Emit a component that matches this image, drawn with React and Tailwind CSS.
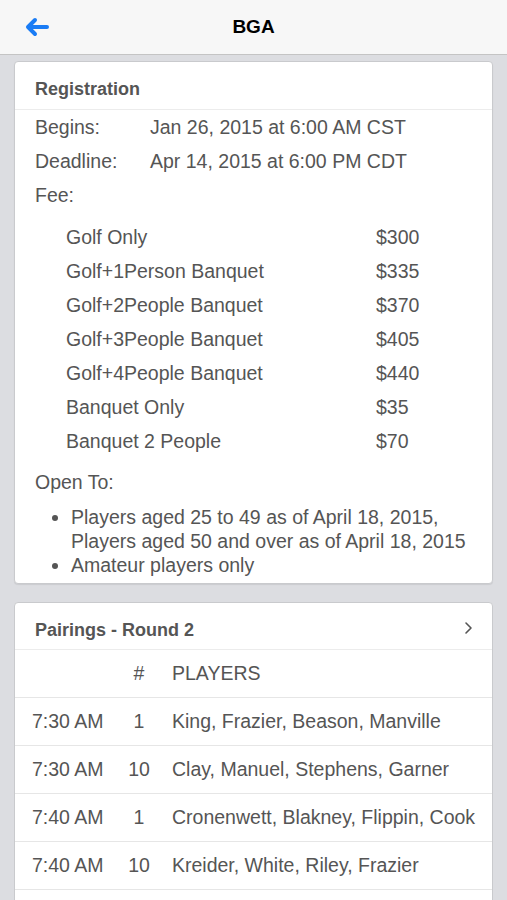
import React from "react";

const fees = [
  ["Golf Only", "$300"],
  ["Golf+1Person Banquet", "$335"],
  ["Golf+2People Banquet", "$370"],
  ["Golf+3People Banquet", "$405"],
  ["Golf+4People Banquet", "$440"],
  ["Banquet Only", "$35"],
  ["Banquet 2 People", "$70"],
];

const pairings = [
  ["7:30 AM", "1", "King, Frazier, Beason, Manville"],
  ["7:30 AM", "10", "Clay, Manuel, Stephens, Garner"],
  ["7:40 AM", "1", "Cronenwett, Blakney, Flippin, Cook"],
  ["7:40 AM", "10", "Kreider, White, Riley, Frazier"],
];

export default function App() {
  return (
    <div className="h-[900px] overflow-hidden bg-[#dcdde1] font-['Liberation_Sans',Arial,sans-serif] text-[#555]">
      {/* nav bar */}
      <div className="relative flex h-[55px] items-center justify-center border-b border-[#c4c4c4] bg-[#f7f7f7]">
        <button className="absolute left-[24px] top-[17px] text-[#1a7cf5]">
          <svg width="26" height="20" viewBox="0 0 26 20" fill="none">
            <path d="M11 3 L4 10 L11 17 M4.5 10 H23" stroke="currentColor" strokeWidth="4" strokeLinecap="round" strokeLinejoin="round" />
          </svg>
        </button>
        <h1 className="text-[19px] font-bold text-black">BGA</h1>
      </div>

      <div className="flex flex-col gap-[18px] px-[14px] pt-[6px]">
        {/* registration card */}
        <div className="rounded-[4px] border border-[#c9cacd] bg-white shadow-[0_1px_1px_rgba(0,0,0,0.08)]">
          <div className="flex h-[48px] items-center border-b border-[#ececec] px-[20px] pt-[7px] text-[18px] font-bold">
            Registration
          </div>
          <div className="px-[20px] pb-[6px] pt-[1px] text-[19.5px]">
            <div className="flex h-[34px] items-center">
              <span className="w-[115px]">Begins:</span>
              <span>Jan 26, 2015 at 6:00 AM CST</span>
            </div>
            <div className="flex h-[34px] items-center">
              <span className="w-[115px]">Deadline:</span>
              <span>Apr 14, 2015 at 6:00 PM CDT</span>
            </div>
            <div className="flex h-[34px] items-center">Fee:</div>
            <div className="pb-[7px] pl-[31px] pt-[8px]">
              {fees.map(([name, price]) => (
                <div key={name} className="flex h-[34px] items-center">
                  <span className="w-[310px]">{name}</span>
                  <span>{price}</span>
                </div>
              ))}
            </div>
            <div className="flex h-[34px] items-center">Open To:</div>
            <ul className="list-disc pl-[36px] pt-[5px] leading-[24px] marker:text-[#555]">
              <li>
                Players aged 25 to 49 as of April 18, 2015,
                <br />
                Players aged 50 and over as of April 18, 2015
              </li>
              <li>Amateur players only</li>
            </ul>
          </div>
        </div>

        {/* pairings card */}
        <div className="rounded-[4px] border border-[#c9cacd] bg-white">
          <div className="flex h-[47px] items-center justify-between border-b border-[#ececec] pl-[20px] pr-[19px] pt-[9px] text-[18px] font-bold">
            <span>Pairings - Round 2</span>
            <svg width="9" height="14" viewBox="0 0 9 14" fill="none" className="-mt-[5px]">
              <path d="M2 2 L7 7 L2 12" stroke="#555" strokeWidth="1.6" strokeLinecap="round" strokeLinejoin="round" />
            </svg>
          </div>
          <div className="text-[19.5px]">
            <div className="flex h-[48px] items-center border-b border-[#e6e6e6]">
              <span className="w-[91px]"></span>
              <span className="w-[66px] text-center">#</span>
              <span>PLAYERS</span>
            </div>
            {pairings.map(([time, hole, players], i) => (
              <div key={i} className="flex h-[48px] items-center whitespace-nowrap border-b border-[#e6e6e6]">
                <span className="w-[91px] pl-[17px]">{time}</span>
                <span className="w-[66px] text-center">{hole}</span>
                <span>{players}</span>
              </div>
            ))}
            <div className="h-[48px]"></div>
          </div>
        </div>
      </div>
    </div>
  );
}
